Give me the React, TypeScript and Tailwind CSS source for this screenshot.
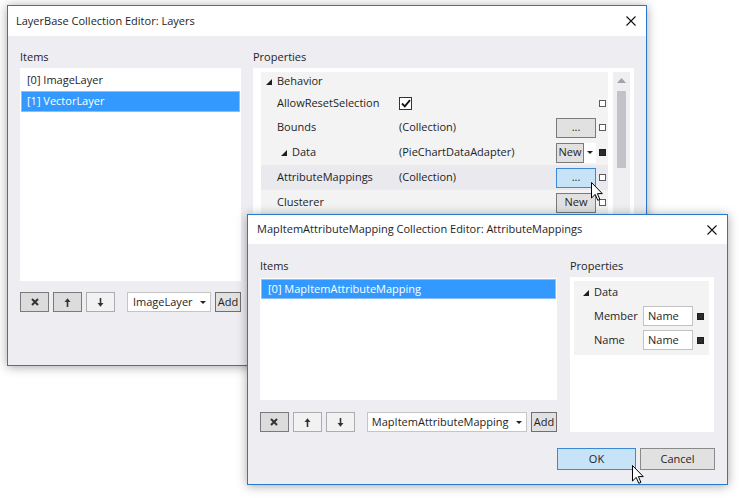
import type { ReactNode } from 'react';

const Tri = () => (
	<svg width="6" height="6" viewBox="0 0 6 6" className="shrink-0">
		<polygon points="6,0 6,6 0,6" fill="#1e1e1e" />
	</svg>
);

function Marker({ filled = false }: { filled?: boolean }) {
	return (
		<span
			className={
				filled
					? 'block h-[7px] w-[7px] shrink-0 border border-[#1e1e1e] bg-[#2b2b2b]'
					: 'block h-[7px] w-[7px] shrink-0 border border-[#5c5c5c] bg-white'
			}
		/>
	);
}

function CloseIcon() {
	return (
		<svg width="10" height="10" viewBox="0 0 10 10">
			<path d="M0.5 0.5 L9.5 9.5 M9.5 0.5 L0.5 9.5" stroke="#111" strokeWidth="1.1" />
		</svg>
	);
}

function Cursor({ className }: { className: string }) {
	return (
		<svg className={className} width="12" height="19" viewBox="0 0 12 19">
			<path
				d="M0.5 0.5 V16 L4.2 12.4 L6.8 18.3 L8.9 17.4 L6.4 11.6 H11.3 Z"
				fill="white"
				stroke="black"
				strokeWidth="1"
			/>
		</svg>
	);
}

const XIcon = () => (
	<svg width="8" height="8" viewBox="0 0 8 8">
		<path d="M1 1 L7 7 M7 1 L1 7" stroke="#333" strokeWidth="2" />
	</svg>
);

const UpIcon = () => (
	<svg width="7" height="9" viewBox="0 0 7 9">
		<path d="M3.5 9 V3" stroke="#333" strokeWidth="1.6" />
		<polygon points="0.5,4 3.5,0.3 6.5,4" fill="#333" />
	</svg>
);

const DownIcon = () => (
	<svg width="7" height="9" viewBox="0 0 7 9">
		<path d="M3.5 0 V6" stroke="#333" strokeWidth="1.6" />
		<polygon points="0.5,5 3.5,8.7 6.5,5" fill="#333" />
	</svg>
);

const Caret = () => (
	<svg width="6" height="3" viewBox="0 0 6 3">
		<polygon points="0,0 6,0 3,3" fill="#222" />
	</svg>
);

function ToolBtn({ dark = false, children }: { dark?: boolean; children: ReactNode }) {
	return (
		<div
			className={
				dark
					? 'flex h-[20px] w-[29px] items-center justify-center border border-[#7a7a7a] bg-[#dcdcdc]'
					: 'flex h-[20px] w-[29px] items-center justify-center border border-[#adadad] bg-[#f2f2f2]'
			}>
			{children}
		</div>
	);
}

function Toolbar({ comboText, comboClass, addClass, xDark, upDark }: { comboText: string; comboClass: string; addClass: string; xDark: boolean; upDark: boolean }) {
	return (
		<div className="flex h-[20px] items-center">
			<ToolBtn dark={xDark}>
				<XIcon />
			</ToolBtn>
			<div className="ml-[4px]">
				<ToolBtn dark={upDark}>
					<UpIcon />
				</ToolBtn>
			</div>
			<div className="ml-[4px]">
				<ToolBtn>
					<DownIcon />
				</ToolBtn>
			</div>
			<div className={comboClass}>
				<span className="truncate">{comboText}</span>
				<Caret />
			</div>
			<div className={addClass}>Add</div>
		</div>
	);
}

function GridBtn({ children, active = false }: { children: ReactNode; active?: boolean }) {
	return (
		<div
			className={
				active
					? 'flex h-[20px] w-[40px] items-center justify-center border border-[#3a88d6] bg-[#c7e3f8]'
					: 'flex h-[20px] w-[40px] items-center justify-center border border-[#7a7a7a] bg-[#e1e1e1]'
			}>
			{children}
		</div>
	);
}

function PropRow({
	label,
	value,
	action,
	marker,
	className,
}: {
	label: ReactNode;
	value?: ReactNode;
	action?: ReactNode;
	marker?: ReactNode;
	className: string;
}) {
	return (
		<div className={className}>
			<div className="w-[138px] shrink-0 pl-[16px]">{label}</div>
			<div className="flex-1">{value}</div>
			<div className="flex w-[40px] shrink-0">{action}</div>
			<div className="ml-[3px] mr-[2px] w-[7px]">{marker}</div>
		</div>
	);
}

const Checkbox = () => (
	<div className="flex h-[13px] w-[13px] items-center justify-center border border-[#333] bg-white">
		<svg width="10" height="9" viewBox="0 0 10 9">
			<path d="M1 4.5 L3.8 7.3 L9 1.2" stroke="#111" strokeWidth="1.8" fill="none" />
		</svg>
	</div>
);

function LayersEditor() {
	return (
		<div className="absolute left-[7px] top-[5px] flex h-[361px] w-[640px] flex-col border border-[#2a78cd] bg-[#eeedf2] shadow-[0_1px_10px_rgba(0,0,0,0.35)]">
			<div className="flex h-[30px] shrink-0 items-center justify-between bg-white pl-[8px] pr-[10px]">
				<span>LayerBase Collection Editor: Layers</span>
				<CloseIcon />
			</div>
			<div className="flex flex-1 gap-[12px] px-[12px] pt-[13px]">
				<div className="flex w-[221px] flex-col">
					<div className="h-[16px] leading-[16px]">Items</div>
					<div className="mt-[3px] h-[213px] bg-white px-[1px] pt-[2px]">
						<div className="flex h-[21px] items-center pl-[6px]">[0] ImageLayer</div>
						<div className="flex h-[21px] items-center border border-[#8cbff2] bg-[#3399ff] pl-[5px] text-white">[1] VectorLayer</div>
					</div>
					<div className="mt-[11px]">
						<Toolbar
							comboText="ImageLayer"
							comboClass="ml-[12px] flex h-[20px] w-[84px] items-center justify-between border border-[#c5c5c5] bg-white pl-[5px] pr-[4px]"
							addClass="ml-[4px] flex h-[20px] w-[26px] items-center justify-center border border-[#707070] bg-[#e1e1e1]"
							xDark
							upDark
						/>
					</div>
				</div>
				<div className="flex flex-1 flex-col">
					<div className="h-[16px] leading-[16px]">Properties</div>
					<div className="mt-[3px] flex h-[244px] bg-white pl-[8px] pr-[4px] pt-[4px]">
						<div className="flex-1 bg-[#f3f3f3]">
							<div className="flex h-[19px] items-center pl-[5px]">
								<Tri />
								<span className="ml-[5px]">Behavior</span>
							</div>
							<PropRow
								className="flex h-[24px] items-center"
								label="AllowResetSelection"
								value={<Checkbox />}
								marker={<Marker />}
							/>
							<PropRow
								className="flex h-[25px] items-center"
								label="Bounds"
								value="(Collection)"
								action={<GridBtn>...</GridBtn>}
								marker={<Marker />}
							/>
							<PropRow
								className="flex h-[25px] items-center"
								label={
									<span className="flex items-center pl-[4px]">
										<Tri />
										<span className="ml-[5px]">Data</span>
									</span>
								}
								value="(PieChartDataAdapter)"
								action={
									<>
										<div className="flex h-[20px] w-[28px] items-center justify-center border border-[#7a7a7a] bg-[#e1e1e1]">New</div>
										<div className="flex h-[20px] w-[12px] items-center justify-center bg-white">
											<Caret />
										</div>
									</>
								}
								marker={<Marker filled />}
							/>
							<PropRow
								className="flex h-[25px] items-center bg-[#e9e9ee]"
								label="AttributeMappings"
								value="(Collection)"
								action={<GridBtn active>...</GridBtn>}
								marker={<Marker />}
							/>
							<PropRow
								className="flex h-[25px] items-center"
								label="Clusterer"
								action={<GridBtn>New</GridBtn>}
								marker={<Marker />}
							/>
						</div>
						<div className="ml-[5px] flex w-[17px] flex-col items-center bg-[#efeff1]">
							<svg className="mt-[6px]" width="9" height="5" viewBox="0 0 9 5">
								<polygon points="0,5 4.5,0 9,5" fill="#a3a3a6" />
							</svg>
							<div className="mt-[8px] h-[77px] w-[9px] bg-[#c2c3c9]" />
						</div>
					</div>
				</div>
			</div>
		</div>
	);
}

function MappingsEditor() {
	return (
		<div className="absolute left-[247px] top-[214px] flex h-[271px] w-[481px] flex-col border border-[#2a78cd] bg-[#eeedf2] shadow-[0_1px_10px_rgba(0,0,0,0.35)]">
			<div className="flex h-[29px] shrink-0 items-center justify-between bg-white pl-[9px] pr-[10px]">
				<span>MapItemAttributeMapping Collection Editor: AttributeMappings</span>
				<CloseIcon />
			</div>
			<div className="flex gap-[13px] px-[12px] pt-[14px]">
				<div className="flex w-[297px] flex-col">
					<div className="h-[16px] leading-[16px]">Items</div>
					<div className="mt-[4px] h-[122px] bg-white px-[1px] pt-[1px]">
						<div className="flex h-[20px] items-center border border-[#8cbff2] bg-[#3399ff] pl-[6px] text-white">[0] MapItemAttributeMapping</div>
					</div>
					<div className="mt-[12px]">
						<Toolbar
							comboText="MapItemAttributeMapping"
							comboClass="ml-[12px] flex h-[20px] w-[161px] items-center justify-between border border-[#c5c5c5] bg-white pl-[4px] pr-[4px]"
							addClass="ml-[4px] flex h-[20px] w-[26px] items-center justify-center border border-[#707070] bg-[#e1e1e1]"
							xDark
							upDark={false}
						/>
					</div>
				</div>
				<div className="flex w-[144px] flex-col">
					<div className="h-[16px] leading-[16px]">Properties</div>
					<div className="mt-[3px] h-[155px] bg-white pl-[4px] pr-[5px] pt-[4px]">
						<div className="h-[74px] bg-[#f3f3f3]">
							<div className="flex h-[23px] items-center pl-[9px]">
								<Tri />
								<span className="ml-[5px]">Data</span>
							</div>
							{['Member', 'Name'].map((name) => (
								<div key={name} className="flex h-[24px] items-center pl-[20px]">
									<span className="w-[49px] shrink-0">{name}</span>
									<div className="flex h-[20px] w-[50px] shrink-0 items-center border border-[#c2c2c2] bg-white pl-[4px]">Name</div>
									<div className="ml-[4px]">
										<Marker filled />
									</div>
								</div>
							))}
						</div>
					</div>
				</div>
			</div>
			<div className="mt-[16px] flex justify-end gap-[4px] pr-[12px]">
				<div className="flex h-[22px] w-[79px] items-center justify-center border border-[#3a88d6] bg-[#c7e3f8]">OK</div>
				<div className="flex h-[22px] w-[75px] items-center justify-center border border-[#8a8a8a] bg-[#e1e1e1]">Cancel</div>
			</div>
		</div>
	);
}

export default function App() {
	return (
		<div className="relative h-[498px] w-[739px] overflow-hidden bg-white font-['Open_Sans',sans-serif] text-[11px] text-[#1e1e1e]">
			<LayersEditor />
			<Cursor className="absolute left-[591px] top-[182px]" />
			<MappingsEditor />
			<Cursor className="absolute left-[632px] top-[465px]" />
		</div>
	);
}
